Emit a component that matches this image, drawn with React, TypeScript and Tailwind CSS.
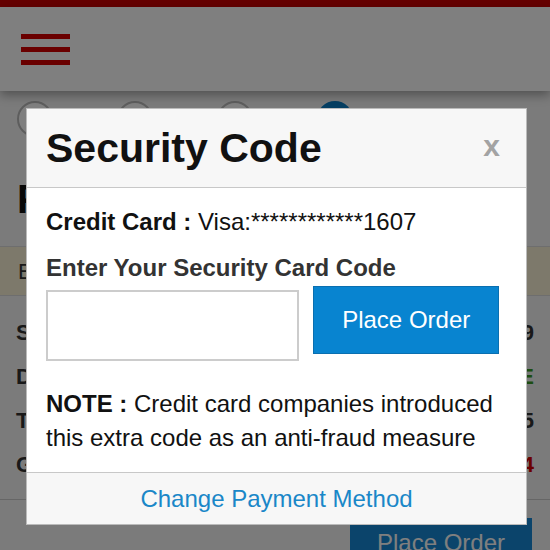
export default function App() {
  return (
    <div className="relative h-[550px] w-[550px] overflow-hidden bg-[#f6f6f6] font-['Liberation_Sans',Arial,sans-serif] text-[#111]">
      {/* page behind the dialog */}
      <div className="h-[7px] bg-[#cc0000]" />
      <header className="relative flex h-[84px] items-center bg-white px-[21px] shadow-[0_4px_10px_rgba(0,0,0,0.35)]">
        <div className="flex w-[49px] flex-col gap-[8px]">
          <span className="h-[5px] bg-[#d40000]" />
          <span className="h-[5px] bg-[#d40000]" />
          <span className="h-[5px] bg-[#d40000]" />
        </div>
      </header>

      <div className="flex gap-[64px] px-[17px] pt-[10px]">
        <span className="h-[36px] w-[36px] rounded-full border-2 border-[#bbb] bg-white" />
        <span className="h-[36px] w-[36px] rounded-full border-2 border-[#bbb] bg-white" />
        <span className="h-[36px] w-[36px] rounded-full border-2 border-[#bbb] bg-white" />
        <span className="h-[36px] w-[36px] rounded-full bg-[#0b7dc4]" />
      </div>

      <h1 className="mt-[40px] px-[17px] text-[40px] leading-[44px] font-bold">Payment</h1>

      <div className="mt-[25px] flex h-[50px] items-center border-y border-[#ddd] bg-[#fbf3d6] px-[18px] text-[22px] text-[#333]">
        Estimated delivery in 3-5 business days
      </div>

      <div className="flex flex-col gap-[11px] px-[16px] pt-[20px] text-[22px] font-bold text-[#333]">
        <div className="flex justify-between"><span>Subtotal</span><span>$24.99</span></div>
        <div className="flex justify-between"><span>Delivery</span><span className="text-[#3a9a22]">FREE</span></div>
        <div className="flex justify-between"><span>Tax</span><span>$1.75</span></div>
        <div className="flex justify-between"><span>Grand Total</span><span className="text-[#d40000]">$26.74</span></div>
      </div>

      <div className="mt-[18px] border-t border-[#ccc]" />
      <div className="flex justify-end pt-[18px] pr-[18px]">
        <button className="h-[50px] w-[182px] bg-[#1689d6] text-[24px] text-white">Place Order</button>
      </div>

      {/* overlay */}
      <div className="absolute inset-0 z-20 bg-black/50" />

      {/* dialog */}
      <div className="absolute top-[108px] left-[26px] z-30 w-[501px] border border-[#bbb] bg-white">
        <div className="flex h-[79px] items-center justify-between border-b border-[#c8c8c8] bg-[#f7f7f7] pr-[26px] pl-[19px]">
          <h2 className="text-[41px] leading-none font-bold text-[#111]">Security Code</h2>
          <span className="pb-[4px] text-[30px] leading-none font-bold text-[#a3a3a3]">x</span>
        </div>

        <div className="pt-[20px] pr-[27px] pb-[17px] pl-[19px]">
          <p className="text-[24px] leading-[28px]">
            <span className="font-bold">Credit Card : </span>Visa:************1607
          </p>
          <p className="mt-[18px] text-[24px] leading-[28px] font-bold text-[#333]">Enter Your Security Card Code</p>
          <div className="flex items-start gap-[14px]">
            <input
              type="text"
              className="mt-[8px] h-[71px] w-[254px] border-2 border-[#ccc] bg-white"
            />
            <button className="mt-[4px] h-[68px] w-[186px] border border-[#0a6fb0] bg-[#0884d0] text-[24px] text-white">
              Place Order
            </button>
          </div>
          <p className="mt-[26px] text-[24px] leading-[34px]">
            <span className="font-bold">NOTE : </span>Credit card companies introduced this extra code as an anti-fraud measure
          </p>
        </div>

        <div className="flex h-[52px] items-center justify-center border-t border-[#c8c8c8] bg-[#f7f7f7] text-[24px] text-[#1a87c8]">
          Change Payment Method
        </div>
      </div>
    </div>
  )
}
